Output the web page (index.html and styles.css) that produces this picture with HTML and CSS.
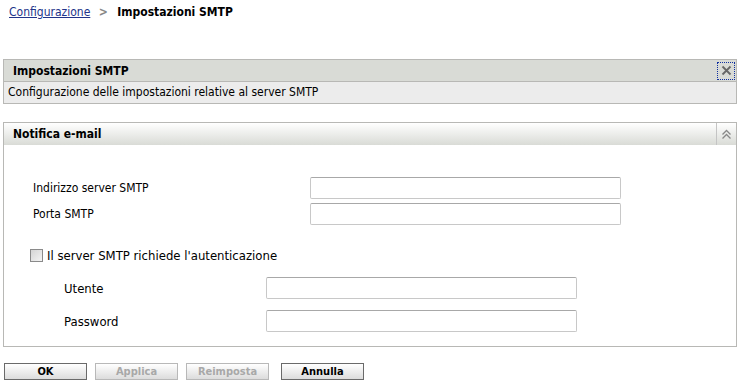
FILE: index.html
```html
<!DOCTYPE html>
<html lang="it">
<head>
    <meta charset="UTF-8">
    <title>Impostazioni SMTP</title>
    <link rel="stylesheet" href="styles.css">
</head>
<body>
    <div class="crumbs">
        <a href="#">Configurazione</a>
        <span class="sep">&gt;</span>
        <span class="current">Impostazioni SMTP</span>
    </div>

    <div class="panel info">
        <div class="panel-head">
            <span class="title">Impostazioni SMTP</span>
            <button class="close" title="Chiudi">
                <svg width="11" height="11" viewBox="0 0 11 11"><path d="M1.5 1.5l8 8M9.5 1.5l-8 8" stroke="#666" stroke-width="1.8"/></svg>
            </button>
        </div>
        <div class="panel-desc">Configurazione delle impostazioni relative al server SMTP</div>
    </div>

    <div class="panel form">
        <div class="panel-head grad">
            <span class="title">Notifica e-mail</span>
            <span class="toggle">
                <svg width="11" height="11" viewBox="0 0 11 11"><path d="M1.5 5.5l4-4 4 4M1.5 9.5l4-4 4 4" stroke="#888" stroke-width="1.3" fill="none"/></svg>
            </span>
        </div>
        <div class="panel-body">
            <div class="fields">
                <label for="host">Indirizzo server SMTP</label>
                <input type="text" id="host">
                <label for="port">Porta SMTP</label>
                <input type="text" id="port">
            </div>
            <label class="check"><input type="checkbox"> Il server SMTP richiede l'autenticazione</label>
            <div class="fields auth">
                <label for="user">Utente</label>
                <input type="text" id="user">
                <label for="pass">Password</label>
                <input type="password" id="pass">
            </div>
        </div>
    </div>

    <div class="actions">
        <button class="btn">OK</button>
        <button class="btn" disabled>Applica</button>
        <button class="btn" disabled>Reimposta</button>
        <button class="btn gap">Annulla</button>
    </div>
</body>
</html>
```

FILE: styles.css
```css
body {
    font-family: "DejaVu Sans Condensed", "DejaVu Sans", sans-serif;
    font-size: 12px;
    color: #000;
    margin: 0;
    padding: 0 3px;
    background: #fff;
}
.crumbs {
    padding: 5px 6px 0;
    height: 59px;
    box-sizing: border-box;
}
.crumbs a {
    color: #22348a;
    text-decoration: underline;
}
.crumbs .sep {
    color: #888;
    font-weight: bold;
    margin: 0 6px 0 5px;
}
.crumbs .current {
    font-weight: bold;
}
.panel {
    border: 1px solid #b8b8b5;
}
.panel-head {
    display: flex;
    align-items: center;
    height: 21px;
    padding-left: 9px;
    background: #d9dbd6;
    border-bottom: 1px solid #b8b8b5;
}
.panel-head .title {
    flex: 1;
    font-weight: bold;
}
.close {
    width: 18px;
    height: 18px;
    margin-right: 1px;
    padding: 0;
    border: 1px dotted #1030a0;
    background: transparent;
    display: flex;
    align-items: center;
    justify-content: center;
}
.panel-desc {
    background: #ececec;
    height: 21px;
    line-height: 21px;
    padding-left: 4px;
}
.form {
    margin-top: 18px;
}
.grad {
    height: 22px;
    background: linear-gradient(#ffffff, #d9dbd6);
    border-bottom: none;
}
.toggle {
    width: 19px;
    height: 22px;
    border-left: 1px solid #c4c4c4;
    display: flex;
    align-items: center;
    justify-content: center;
}
.panel-body {
    padding: 32px 0 14px;
}
.fields {
    display: grid;
    grid-template-columns: 277px 311px;
    row-gap: 4px;
    align-items: center;
    padding-left: 29px;
}
.fields input {
    height: 22px;
    box-sizing: border-box;
    border: 1px solid #c8c8c8;
    border-top-color: #a8a8a8;
    border-radius: 2px;
    margin: 0;
}
.check {
    display: flex;
    align-items: center;
    gap: 4px;
    font-size: 13px;
    margin: 23px 0 14px 26px;
}
.check input {
    appearance: none;
    margin: 0;
    width: 13px;
    height: 13px;
    box-sizing: border-box;
    border: 1px solid #8a8a8a;
    background: linear-gradient(135deg, #d4d4d4, #f4f4f4);
}
.auth {
    padding-left: 60px;
    grid-template-columns: 202px 311px;
    row-gap: 11px;
    font-size: 13px;
}
.actions {
    display: flex;
    gap: 8px;
    padding: 16px 1px 0;
}
.btn {
    font-family: "DejaVu Sans Condensed", "DejaVu Sans", sans-serif;
    font-size: 11px;
    font-weight: bold;
    width: 83px;
    height: 17px;
    padding: 0;
    border: 1px solid #6a6a6a;
    background: linear-gradient(#ffffff, #dcdcdc);
    color: #000;
}
.btn:disabled {
    color: #a8a8a8;
    border-color: #b8b8b8;
}
.gap {
    margin-left: 4px;
}
```
